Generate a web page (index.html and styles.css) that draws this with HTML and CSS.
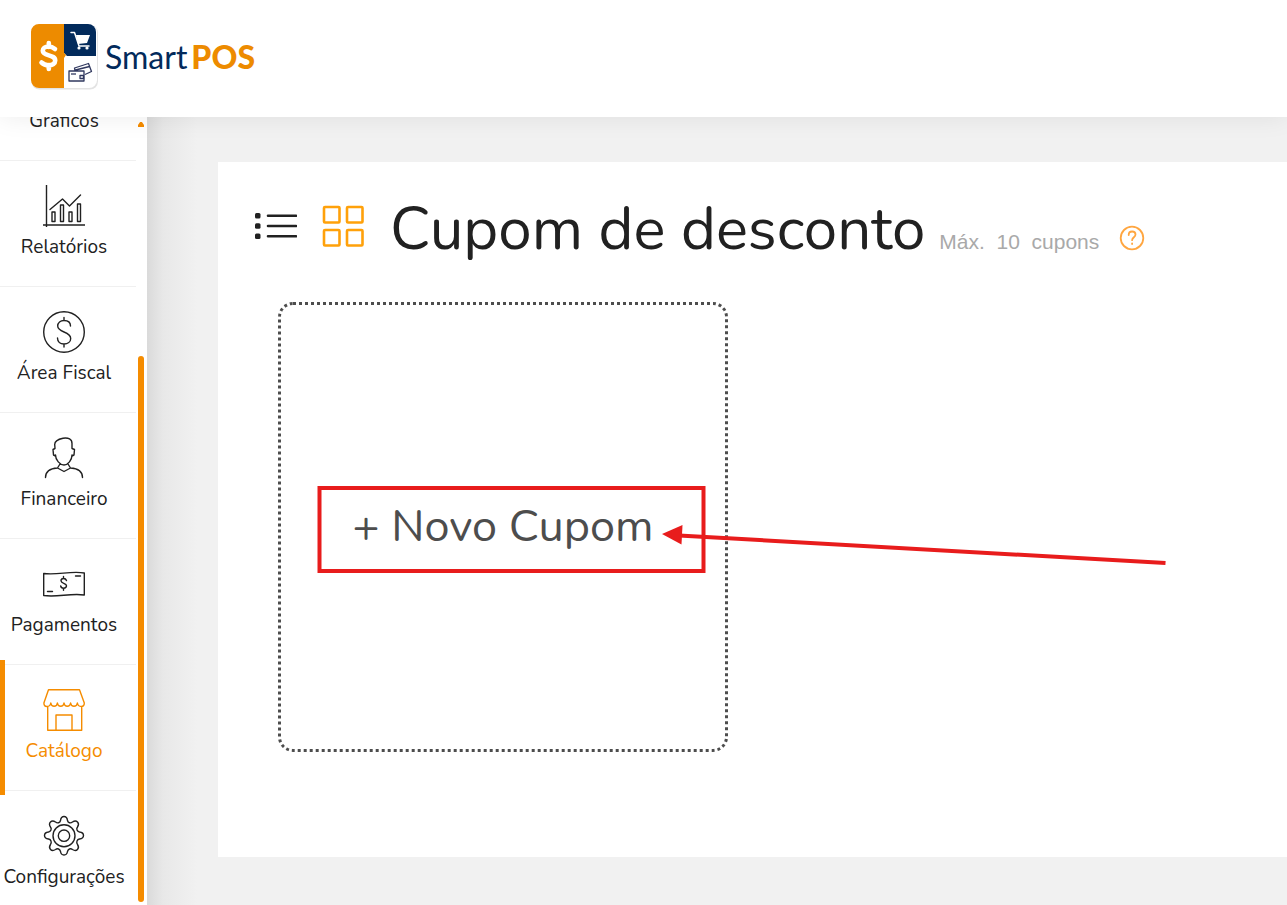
FILE: index.html
```html
<!DOCTYPE html>
<html lang="pt-BR">
<head>
<meta charset="utf-8">
<meta name="viewport" content="width=device-width, initial-scale=1">
<title>Smart POS - Cupom de desconto</title>
<link rel="stylesheet" href="styles.css">
</head>
<body>
<header class="topbar">
  <a class="brand" href="#" aria-label="Smart POS">
    <svg class="brand-mark" viewBox="0 0 70 70" aria-hidden="true">
      <rect x="1.500" y="3" width="66.500" height="64.500" rx="8" fill="#e3e3e3"/>
      <rect x="1" y="2" width="66" height="64" rx="8" fill="#fff"/>
      <path d="M34 2h24a8 8 0 0 1 8 8v24H37l-3-3z" fill="#022a5b"/>
      <path d="M9 2h25v29l2 2-2 3v30H9a8 8 0 0 1-8-8V10a8 8 0 0 1 8-8z" fill="#ed8b00"/>
      <path d="M25 27c-2-1.700-4-2.500-6.500-2.500-3.700 0-5.700 1.800-5.700 4.200 0 6 12.400 3.300 12.400 9.800 0 3-2.700 4.700-6.700 4.700-2.700 0-5-.8-7-2.700M18.800 21v4M18.800 43v4" fill="none" stroke="#fff" stroke-width="4.600" stroke-linecap="round"/>
      <path d="M41 10.500h3.500l4.500 13.500h10" fill="none" stroke="#fff" stroke-width="1.500" stroke-linecap="round" stroke-linejoin="round"/>
      <path d="M46 13h14l-3 8-9 1z" fill="#fff"/>
      <circle cx="49" cy="26" r="1.600" fill="#fff"/><circle cx="57" cy="26" r="1.600" fill="#fff"/>
      <g fill="none" stroke="#30385f" stroke-width="1.300" stroke-linejoin="round">
        <path d="M39 49h15v10H39zM45 48.500l-.5-2.500 14-4.500 3 8-6.500 3M45.500 48l14-3.500"/>
        <rect x="50" y="53.500" width="3.500" height="3"/>
        <path d="M41 52h5"/>
      </g>
    </svg>
    <span class="brand-name">Smart<b>POS</b></span>
  </a>
</header>

<div class="layout">
  <nav class="sidebar" aria-label="Menu principal">
    <ul class="menu">
      <li><a class="menu-item" href="#">
        <svg class="menu-icon" viewBox="0 0 42 42" aria-hidden="true"><path d="M3 0v42M0 40h42M8 36V22h5v14zM20 36V14h5v22z"/></svg>
        <span>Gráficos</span></a></li>
      <li><a class="menu-item" href="#">
        <svg class="menu-icon" viewBox="0 0 42 42" aria-hidden="true"><path d="M3.500 0v42M0 40h42M7 24.500l12.500-10.500 7 7 11-11M9 27h3v9.500H9zM17.500 20h3v16.500h-3zM26 27h3v9.500h-3zM34.500 19h3v17.500h-3z"/></svg>
        <span>Relatórios</span></a></li>
      <li><a class="menu-item" href="#">
        <svg class="menu-icon" viewBox="0 0 42 42" aria-hidden="true"><circle cx="21" cy="21" r="20.300"/><path d="M27.500 15c0-4-3-5.500-6.500-5.500s-6.300 2-6.300 5.500c0 7 13 5 13 12.500 0 3.500-3 5.500-6.700 5.500s-6.500-2-6.500-6M21 6.500v3M21 33v3"/></svg>
        <span>Área Fiscal</span></a></li>
      <li><a class="menu-item" href="#">
        <svg class="menu-icon" viewBox="0 0 42 42" aria-hidden="true"><path d="M12 11.500l-.3-4c0-4 3.300-5.300 8.300-6.300 5.500-.7 9 .8 9 5.300v5M12 11.500l-2 1 .5 5.500 2 1M29 11.500l2.500 1-.5 5.500-2 1M12.500 18c0 5 4.500 10 8.500 10s8-5 8-10M17 27l-2.500 4 6.500 3.500 6.500-3.500-2.500-4M14.500 31C7 31.500 2.500 34 2.500 40.500M27.500 31c7.500.5 12 3 12 9.500"/></svg>
        <span>Financeiro</span></a></li>
      <li><a class="menu-item" href="#">
        <svg class="menu-icon" viewBox="0 0 42 42" aria-hidden="true"><path d="M.7 10.500c14 2 27-3 40.600-.5v22c-14-2-27 2.500-40.600.5zM4.500 28.500h5M32.500 13h5M23.500 17.500c-.5-1.500-1.500-2-3-2s-2.500 1-2.500 2.300c0 3 5.500 2 5.500 5 0 1.400-1 2.400-3 2.400-1.500 0-2.500-.7-2.800-2.200M20.500 13.500v2M20.500 25.200v2"/></svg>
        <span>Pagamentos</span></a></li>
      <li><a class="menu-item menu-item-active" href="#" aria-current="page">
        <svg class="menu-icon" viewBox="0 0 42 42" aria-hidden="true"><path d="M5.500.7h31L41.300 14c0 2-1.300 3.500-3 3.500s-3.600-1.500-3.900-3.500c-.3 2-1.800 3.300-3.400 3.300s-3.100-1.300-3.400-3.300c-.3 2-1.700 3.300-3.300 3.300s-3-1.300-3.300-3.300c-.3 2-1.700 3.300-3.300 3.300s-3-1.300-3.300-3.300c-.3 2-1.700 3.300-3.300 3.300s-3-1.300-3.300-3.300c-.3 2-2 3.500-3.900 3.500s-3-1.500-3-3.500zM4.700 17.500v23.800h34V17.500M13 41V26h16v15"/></svg>
        <span>Catálogo</span></a></li>
      <li><a class="menu-item" href="#">
        <svg class="menu-icon" viewBox="0 0 42 42" aria-hidden="true"><path d="M17.500 5.500Q18 1.500 21 1.500T24.500 5.500C25 8 27.500 8.500 29.500 7Q32.500 5 34.500 7T34.500 12C33 14 34 16.500 36.500 17Q40.500 17.500 40.500 20.500T36.500 24C34 24.500 33 27 34.500 29.500Q36.500 32.500 34.500 34.500T29.500 34.500C27.500 33 25 34 24.500 36.500Q24 40 21 40T17.500 36.500C17 34 14.500 33 12.500 34.500Q9.500 36.500 7.500 34.500T7.500 29.500C9 27 8 24.500 5.500 24Q1.500 23.500 1.500 20.500T5.500 17C8 16.500 9 14 7.500 12Q5.500 9 7.500 7T12.500 7C14.500 8.500 17 8 17.500 5.500z"/><circle cx="21" cy="20.700" r="11"/><circle cx="21" cy="20.700" r="5.700"/></svg>
        <span>Configurações</span></a></li>
    </ul>
    <div class="scroll-track" aria-hidden="true">
      <span class="scroll-arrow"></span>
      <span class="scroll-thumb"></span>
    </div>
  </nav>

  <main class="content">
    <section class="panel">
      <div class="panel-head">
        <div class="view-switch">
          <button class="view-button" type="button" aria-label="Ver em lista">
            <svg class="view-icon" viewBox="0 0 42 42" aria-hidden="true"><g fill="#212121"><rect y="8" width="5.500" height="5.500" rx="1.500"/><rect y="18.300" width="5.500" height="5.500" rx="1.500"/><rect y="28.600" width="5.500" height="5.500" rx="1.500"/></g><path d="M13 10.700h28M13 21h28M13 31.300h28" stroke="#212121" stroke-width="2.600" stroke-linecap="round"/></svg>
          </button>
          <button class="view-button" type="button" aria-label="Ver em grade" aria-pressed="true">
            <svg class="view-icon" viewBox="0 0 42 42" aria-hidden="true"><g fill="none" stroke="#ffa10a" stroke-width="2.600"><rect x="2" y="2" width="15.500" height="15.500" rx="1"/><rect x="25" y="2" width="15.500" height="15.500" rx="1"/><rect x="2" y="25" width="15.500" height="15.500" rx="1"/><rect x="25" y="25" width="15.500" height="15.500" rx="1"/></g></svg>
          </button>
        </div>
        <h1 class="title">Cupom de desconto</h1>
        <p class="limit">Máx.&nbsp; 10&nbsp; cupons</p>
        <button class="help" type="button" aria-label="Ajuda">
          <svg class="help-icon" viewBox="0 0 26 26" aria-hidden="true"><circle cx="13" cy="13" r="11.300"/><path d="M9.700 10c0-2.200 1.400-3.500 3.400-3.500s3.400 1.300 3.400 3.100c0 2.600-3.400 2.700-3.400 5.600"/><path d="M13.100 18.300v.7"/></svg>
        </button>
      </div>

      <div class="coupon-list">
        <button class="new-coupon" type="button">+ Novo Cupom</button>
        <svg class="callout" viewBox="0 0 890 90" aria-hidden="true">
          <rect x="2.500" y="2" width="384" height="83" fill="none" stroke="#e81c1c" stroke-width="4"/>
          <path d="M362 49.500L848.500 77" stroke="#e81c1c" stroke-width="4"/>
          <path d="M345 48l20.500-9-1 19.500z" fill="#e81c1c"/>
        </svg>
      </div>
    </section>
  </main>
</div>
</body>
</html>
```
FILE: styles.css
```css
* {
  box-sizing: border-box;
}

body {
  margin: 0;
  height: 100vh;
  display: flex;
  flex-direction: column;
  overflow: hidden;
  background: #f1f1f1;
  color: #212121;
  font-family: "Nunito", "Lato", sans-serif;
}

button {
  padding: 0;
  border: 0;
  background: none;
  font: inherit;
  color: inherit;
  cursor: pointer;
}

a {
  color: inherit;
  text-decoration: none;
}

svg {
  display: block;
}

.topbar {
  position: relative;
  z-index: 2;
  flex: none;
  padding: 22px 30px 25px;
  background: #fff;
  box-shadow: 0 0 24px rgba(0, 0, 0, 0.08);
}

.brand {
  display: inline-flex;
  align-items: center;
  gap: 5px;
  vertical-align: top;
}

.brand-mark {
  width: 70px;
  height: 70px;
}

.brand-name {
  display: flex;
  gap: 4px;
  color: #022a5b;
  font-family: "Lato", sans-serif;
  font-size: 32px;
  line-height: 40px;
}

.brand-name b {
  color: #ed8b00;
  font-weight: 900;
}

.layout {
  flex: 1;
  min-height: 0;
  display: flex;
}

.sidebar {
  position: relative;
  z-index: 1;
  flex: none;
  display: flex;
  width: 147px;
  overflow: hidden;
  background: #fff;
}

.menu {
  flex: 1;
  margin: -82px 0 0;
  padding: 0;
  list-style: none;
}

.menu-item {
  position: relative;
  display: flex;
  flex-direction: column;
  align-items: center;
  gap: 6px;
  height: 126px;
  padding: 24px 8px 0 0;
  border-bottom: 1px solid #f0f0f0;
  font-size: 19px;
  line-height: 28px;
}

.menu-item-active {
  color: #f58c00;
}

.menu-item-active::before {
  content: "";
  position: absolute;
  inset: -5px auto -5px 0;
  width: 5px;
  background: #f58c00;
}

.menu-icon {
  flex: none;
  width: 42px;
  height: 42px;
  fill: none;
  stroke: currentColor;
  stroke-width: 1.4;
  stroke-linecap: round;
  stroke-linejoin: round;
}

.scroll-track {
  display: flex;
  flex-direction: column;
  justify-content: space-between;
  width: 11px;
  padding: 5px 3px 3px 2px;
}

.scroll-arrow {
  height: 5px;
  background: #f58c00;
  clip-path: polygon(35% 0, 65% 0, 100% 60%, 100% 100%, 0 100%, 0 60%);
}

.scroll-thumb {
  height: 70%;
  border-radius: 3px;
  background: #f58c00;
}

.content {
  flex: 1;
  min-width: 0;
  display: flex;
  padding: 45px 0 48px 71px;
  background: linear-gradient(90deg, #dadada, #e8e8e8 16px, #f1f1f1 50px);
}

.panel {
  flex: 1;
  min-width: 0;
  padding: 27px 37px;
  background: #fff;
}

.panel-head {
  display: flex;
  align-items: baseline;
  height: 80px;
  white-space: nowrap;
}

.view-switch {
  display: flex;
  align-self: flex-start;
  gap: 25px;
  margin: 16px 26px 0 0;
}

.view-icon {
  width: 42px;
  height: 42px;
}

.title {
  margin: 0;
  font-size: 60px;
  line-height: 80px;
  font-weight: 400;
}

.limit {
  margin: 0 20px 0 14px;
  color: #a9a9a9;
  font-family: "Liberation Sans", Arial, sans-serif;
  font-size: 21px;
  line-height: 24px;
}

.help {
  align-self: center;
  margin-top: 18px;
}

.help-icon {
  width: 26px;
  height: 26px;
  fill: none;
  stroke: #ffa640;
  stroke-width: 1.8;
  stroke-linecap: round;
}

.coupon-list {
  position: relative;
  padding: 33px 23px 0;
}

.new-coupon {
  display: block;
  width: 450px;
  height: 450px;
  border: 3px dotted #4d4d4d;
  border-radius: 15px;
  color: #4d4d4d;
  font-size: 45px;
  line-height: 60px;
}

.callout {
  position: absolute;
  top: 217px;
  left: 62px;
  width: 890px;
  height: 90px;
  pointer-events: none;
}
```
